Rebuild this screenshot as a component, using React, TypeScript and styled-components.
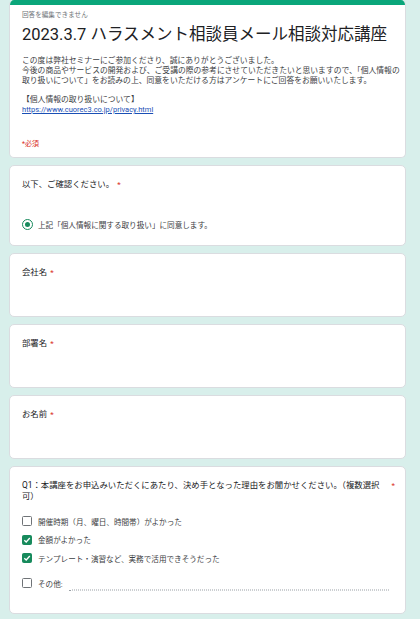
import React from 'react';
import styled, { createGlobalStyle } from 'styled-components';

const GlobalStyle = createGlobalStyle`
  html, body {
    margin: 0;
    padding: 0;
    background: #d8efeb;
  }
  body {
    font-family: Roboto, "Noto Sans CJK JP", "Noto Sans", sans-serif;
    color: #202124;
  }
`;

const Page = styled.div`
  width: 397px;
  margin-left: 9px;
  display: flex;
  flex-direction: column;
  gap: 7px;
  padding-bottom: 20px;
`;

const Card = styled.section<{ $height?: number }>`
  box-sizing: border-box;
  background: #fff;
  border: 1px solid #dadce0;
  border-radius: 5px;
  padding: 12.5px 10px 0 12px;
  height: ${p => (p.$height ? `${p.$height}px` : 'auto')};
`;

const HeaderCard = styled.section`
  box-sizing: border-box;
  height: 158px;
  background: #fff;
  border: 1px solid #dadce0;
  border-top: none;
  border-radius: 5px;
  overflow: hidden;
`;

const TopBar = styled.div`
  height: 5px;
  background: #0aa67a;
`;

const HeaderBody = styled.div`
  padding: 5.5px 12px 0 12px;
`;

const Notice = styled.div`
  font-size: 6.6px;
  line-height: 9px;
  color: #70757a;
`;

const Title = styled.h1`
  margin: 4.5px 0 0;
  font-size: 16.5px;
  line-height: 22px;
  font-weight: 400;
  color: #202124;
  white-space: nowrap;
`;

const Description = styled.div`
  margin-top: 10px;
  font-size: 7.8px;
  line-height: 9.8px;
  color: #3c4043;
  white-space: nowrap;
`;

const Link = styled.a`
  color: #1a4fb5;
  font-size: 7.5px;
  text-decoration: underline;
`;

const Required = styled.div`
  margin-top: 25px;
  font-size: 7px;
  line-height: 9px;
  color: #d93025;
`;

const QuestionRow = styled.div`
  display: flex;
  align-items: flex-start;
`;

const QuestionText = styled.div<{ $wide?: boolean }>`
  flex: ${p => (p.$wide ? '1' : '0 1 auto')};
  font-size: 8.4px;
  line-height: 11px;
  color: #202124;
  white-space: nowrap;
`;

const Star = styled.span`
  margin-left: 3px;
  font-size: 8px;
  line-height: 11px;
  color: #d93025;
`;

const Options = styled.div<{ $top: number }>`
  margin-top: ${p => p.$top}px;
  display: flex;
  flex-direction: column;
  gap: 4.5px;
`;

const OptionRow = styled.label<{ $gapBefore?: number }>`
  display: flex;
  align-items: center;
  height: 14px;
  margin-top: ${p => p.$gapBefore ?? 0}px;
`;

const OptionLabel = styled.span`
  margin-left: 6px;
  font-size: 7.6px;
  color: #3c4043;
  white-space: nowrap;
`;

const Radio = styled.span`
  box-sizing: border-box;
  width: 11px;
  height: 11px;
  border-radius: 50%;
  border: 1.5px solid #178a5c;
  display: flex;
  align-items: center;
  justify-content: center;
  margin-left: -0.5px;
  margin-right: -0.5px;
  &::after {
    content: '';
    width: 5px;
    height: 5px;
    border-radius: 50%;
    background: #178a5c;
  }
`;

const Box = styled.span<{ $checked?: boolean }>`
  box-sizing: border-box;
  flex: none;
  width: 10px;
  height: 10px;
  border-radius: 1.5px;
  border: 1.3px solid ${p => (p.$checked ? '#178a5c' : '#6f7377')};
  background: ${p => (p.$checked ? '#178a5c' : '#fff')};
  display: flex;
  align-items: center;
  justify-content: center;
`;

const OtherInput = styled.div`
  flex: 1;
  height: 12px;
  margin: 0 6px 0 6px;
  border-bottom: 1px dotted #9aa0a6;
  transform: translateY(0.5px);
`;

const Checkbox = ({ checked }: { checked?: boolean }) => (
  <Box $checked={checked}>
    {checked && (
      <svg width="8" height="8" viewBox="0 0 8 8">
        <path d="M1.3 4.2 L3.2 6 L6.8 2" fill="none" stroke="#fff" strokeWidth="1.3" />
      </svg>
    )}
  </Box>
);

const Question = ({ text, wide }: { text: React.ReactNode; wide?: boolean }) => (
  <QuestionRow>
    <QuestionText $wide={wide}>{text}</QuestionText>
    <Star>*</Star>
  </QuestionRow>
);

const reasons = [
  { label: '開催時期（月、曜日、時間帯）がよかった', checked: false },
  { label: '金額がよかった', checked: true },
  { label: 'テンプレート・演習など、実務で活用できそうだった', checked: true },
];

export default function App() {
  return (
    <>
      <GlobalStyle />
      <Page>
        <HeaderCard>
          <TopBar />
          <HeaderBody>
            <Notice>回答を編集できません</Notice>
            <Title>2023.3.7 ハラスメント相談員メール相談対応講座</Title>
            <Description>
              この度は弊社セミナーにご参加くださり、誠にありがとうございました。
              <br />
              今後の商品やサービスの開発および、ご受講の際の参考にさせていただきたいと思いますので、「個人情報の
              <br />
              取り扱いについて」をお読みの上、同意をいただける方はアンケートにご回答をお願いいたします。
              <br />
              <br />
              【個人情報の取り扱いについて】
              <br />
              <Link href="#">https://www.cuorec3.co.jp/privacy.html</Link>
            </Description>
            <Required>*必須</Required>
          </HeaderBody>
        </HeaderCard>

        <Card $height={81}>
          <Question text="以下、ご確認ください。" />
          <Options $top={27.5}>
            <OptionRow>
              <Radio />
              <OptionLabel>上記「個人情報に関する取り扱い」に同意します。</OptionLabel>
            </OptionRow>
          </Options>
        </Card>

        <Card $height={64}>
          <Question text="会社名" />
        </Card>
        <Card $height={64}>
          <Question text="部署名" />
        </Card>
        <Card $height={64}>
          <Question text="お名前" />
        </Card>

        <Card $height={148}>
          <Question
            wide
            text={
              <>
                Q1：本講座をお申込みいただくにあたり、決め手となった理由をお聞かせください。（複数選択
                <br />
                可）
              </>
            }
          />
          <Options $top={12.5}>
            {reasons.map(r => (
              <OptionRow key={r.label}>
                <Checkbox checked={r.checked} />
                <OptionLabel>{r.label}</OptionLabel>
              </OptionRow>
            ))}
            <OptionRow $gapBefore={6.5}>
              <Checkbox />
              <OptionLabel>その他:</OptionLabel>
              <OtherInput />
            </OptionRow>
          </Options>
        </Card>
      </Page>
    </>
  );
}
